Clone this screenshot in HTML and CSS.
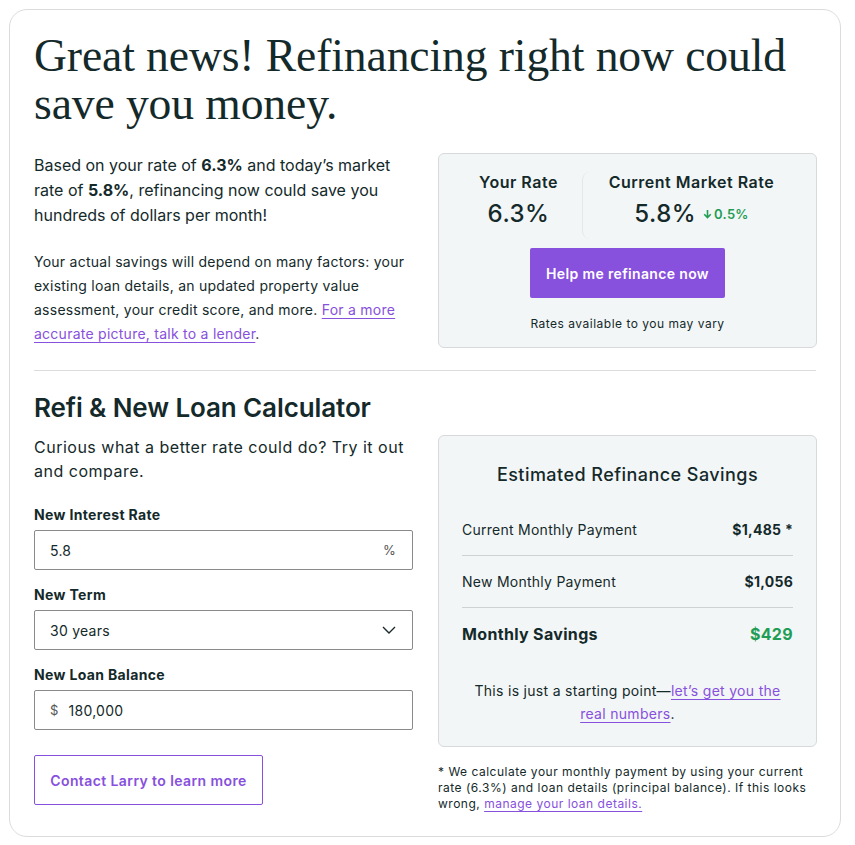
FILE: index.html
```html
<!DOCTYPE html>
<html>
<head>
    <title>Refinance</title>
    <link rel="stylesheet" href="styles.css">
</head>
<body>
    <div class="card">
        <h1 class="headline">Great news! Refinancing right now could save you money.</h1>

        <div class="row">
            <div class="col">
                <p class="lead">Based on your rate of <b>6.3%</b> and today’s market rate of <b>5.8%</b>, refinancing now could save you hundreds of dollars per month!</p>
                <p class="small">Your actual savings will depend on many factors: your existing loan details, an updated property value assessment, your credit score, and more. <a href="#">For a more accurate picture, talk to a lender</a>.</p>
            </div>
            <div class="col">
                <div class="panel rates">
                    <div class="rate-pair">
                        <div class="rate">
                            <div class="rate-label">Your Rate</div>
                            <div class="rate-value">6.3%</div>
                        </div>
                        <div class="rate rate-market">
                            <div class="rate-label">Current Market Rate</div>
                            <div class="rate-value">5.8% <span class="drop"><svg width="9" height="10" viewBox="0 0 9 10"><path d="M4.5 1v7.5M1.2 5.3l3.3 3.3 3.3-3.3" fill="none" stroke="currentColor" stroke-width="1.6"/></svg>0.5%</span></div>
                        </div>
                    </div>
                    <button class="btn-primary">Help me refinance now</button>
                    <div class="note">Rates available to you may vary</div>
                </div>
            </div>
        </div>

        <hr class="rule">

        <h2 class="calc-title">Refi &amp; New Loan Calculator</h2>

        <div class="row">
            <div class="col">
                <p class="lead curious">Curious what a better rate could do? Try it out and compare.</p>

                <label class="field-label first">New Interest Rate</label>
                <div class="field">
                    <span class="field-value">5.8</span>
                    <span class="suffix">%</span>
                </div>

                <label class="field-label">New Term</label>
                <div class="field">
                    <span class="field-value">30 years</span>
                    <svg width="14" height="8" viewBox="0 0 14 8"><path d="M1 1l6 6 6-6" fill="none" stroke="#1a2a2a" stroke-width="1.4"/></svg>
                </div>

                <label class="field-label">New Loan Balance</label>
                <div class="field field-start">
                    <span class="prefix">$</span>
                    <span class="field-value">180,000</span>
                </div>

                <button class="btn-outline">Contact Larry to learn more</button>
            </div>
            <div class="col">
                <div class="panel savings">
                    <h3>Estimated Refinance Savings</h3>
                    <div class="line">
                        <span>Current Monthly Payment</span>
                        <b>$1,485 *</b>
                    </div>
                    <div class="line">
                        <span>New Monthly Payment</span>
                        <b>$1,056</b>
                    </div>
                    <div class="line line-total">
                        <span>Monthly Savings</span>
                        <b class="green">$429</b>
                    </div>
                    <p class="start">This is just a starting point—<a href="#">let’s get you the real numbers</a>.</p>
                </div>
                <p class="footnote">* We calculate your monthly payment by using your current rate (6.3%) and loan details (principal balance). If this looks wrong, <a href="#">manage your loan details.</a></p>
            </div>
        </div>
    </div>
</body>
</html>
```

FILE: styles.css
```css
body {
    margin: 0;
    padding: 9px 14px 10px 9px;
    font-family: Inter, "Noto Sans", sans-serif;
    color: #14292a;
    background: #fff;
}
.card {
    border: 1px solid #dcdcdc;
    border-radius: 18px;
    padding: 22px 24px 24px 24px;
}
.headline {
    font-family: "Liberation Serif", "DejaVu Serif", serif;
    font-weight: normal;
    font-size: 45.6px;
    line-height: 48px;
    margin: 0 0 25px 0;
    letter-spacing: -0.1px;
}
.row {
    display: grid;
    grid-template-columns: 379px 379px;
    column-gap: 25px;
}
p {
    margin: 0;
}
.lead {
    font-size: 16px;
    line-height: 25px;
}
.lead b {
    font-weight: 700;
}
.curious {
    letter-spacing: 0.5px;
    line-height: 24px;
}
.small {
    font-size: 14px;
    line-height: 24px;
    letter-spacing: 0.25px;
    margin-top: 22px;
}
a {
    color: #8750dd;
    text-decoration: underline;
    text-underline-offset: 3px;
}
.panel {
    background: #f3f6f7;
    border: 1px solid #d7d9da;
    border-radius: 6px;
}
.rates {
    display: flex;
    flex-direction: column;
    align-items: center;
    padding: 18px 16px 16px 16px;
}
.rate-pair {
    display: flex;
    width: 100%;
}
.rate {
    text-align: center;
    width: 127px;
}
.rate-market {
    flex: 1;
    border-left: 1px solid #e4e7e8;
    border-radius: 8px 0 0 8px;
}
.rate-label {
    font-size: 16px;
    font-weight: 600;
    line-height: 20px;
    letter-spacing: 0.5px;
}
.rate-value {
    font-size: 24px;
    font-weight: 500;
    line-height: 30px;
    letter-spacing: 0.5px;
    margin-top: 7px;
    padding-bottom: 10px;
}
.drop {
    color: #1f9d55;
    font-size: 13px;
    font-weight: 600;
    letter-spacing: 0.3px;
    vertical-align: 3px;
}
.drop svg {
    margin-right: 2px;
}
.btn-primary {
    font-family: Inter, sans-serif;
    background: #8750dd;
    color: #fff;
    border: none;
    border-radius: 2px;
    font-size: 14px;
    font-weight: 600;
    letter-spacing: 0.35px;
    width: 195px;
    height: 50px;
    margin-top: 9px;
}
.note {
    font-size: 12px;
    letter-spacing: 0.5px;
    margin-top: 18px;
}
.rule {
    border: none;
    border-top: 1px solid #dcdcdc;
    margin: 22px 0 22px 0;
}
.calc-title {
    font-size: 26px;
    font-weight: 600;
    line-height: 30px;
    letter-spacing: -0.1px;
    margin: 0 0 12px 0;
}
.field-label {
    display: block;
    font-size: 14px;
    font-weight: 700;
    letter-spacing: 0.35px;
    margin: 16px 0 7px 0;
}
.field-label.first {
    margin-top: 23px;
}
.field {
    display: flex;
    align-items: center;
    justify-content: space-between;
    height: 38px;
    border: 1px solid #8a8a8a;
    border-radius: 2px;
    padding: 0 16px 0 15px;
    font-size: 14px;
    letter-spacing: 0.25px;
}
.field-start {
    justify-content: flex-start;
}
.suffix, .prefix {
    color: #555;
    font-size: 13px;
}
.prefix {
    margin-right: 10px;
}
.btn-outline {
    display: block;
    font-family: Inter, sans-serif;
    margin-top: 25px;
    background: #fff;
    border: 1px solid #8750dd;
    border-radius: 2px;
    color: #8750dd;
    font-size: 14px;
    font-weight: 600;
    letter-spacing: 0.4px;
    width: 229px;
    height: 50px;
}
.savings {
    padding: 28px 23px 21px 23px;
}
.savings h3 {
    font-size: 18px;
    font-weight: 500;
    letter-spacing: 0.45px;
    text-align: center;
    margin: 0 0 19px 0;
}
.line {
    display: flex;
    justify-content: space-between;
    align-items: center;
    font-size: 14px;
    letter-spacing: 0.26px;
    height: 51px;
    border-bottom: 1px solid #cfd2d3;
}
.line b {
    font-weight: 700;
}
.line-total {
    border-bottom: none;
    font-size: 16px;
    font-weight: 700;
    letter-spacing: 0.33px;
}
.green {
    color: #1f9d55;
}
.start {
    font-size: 14px;
    line-height: 23px;
    letter-spacing: 0.3px;
    text-align: center;
    margin-top: 20px;
    padding: 0 10px;
}
.footnote {
    font-size: 12px;
    line-height: 16px;
    letter-spacing: 0.5px;
    margin-top: 17px;
}
```
